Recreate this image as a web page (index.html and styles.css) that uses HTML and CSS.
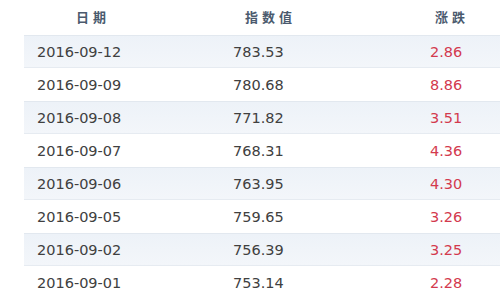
FILE: index.html
```html
<!DOCTYPE html>
<html lang="zh-CN">
<head>
    <meta charset="UTF-8">
    <title>指数值</title>
    <link rel="stylesheet" href="styles.css">
</head>
<body>
    <div class="quote-table">
        <div class="row head">
            <div class="col-date">日期</div>
            <div class="col-value">指数值</div>
            <div class="col-change">涨跌</div>
        </div>
        <div class="row odd">
            <div>2016-09-12</div><div>783.53</div><div class="up">2.86</div>
        </div>
        <div class="row">
            <div>2016-09-09</div><div>780.68</div><div class="up">8.86</div>
        </div>
        <div class="row odd">
            <div>2016-09-08</div><div>771.82</div><div class="up">3.51</div>
        </div>
        <div class="row">
            <div>2016-09-07</div><div>768.31</div><div class="up">4.36</div>
        </div>
        <div class="row odd">
            <div>2016-09-06</div><div>763.95</div><div class="up">4.30</div>
        </div>
        <div class="row">
            <div>2016-09-05</div><div>759.65</div><div class="up">3.26</div>
        </div>
        <div class="row odd">
            <div>2016-09-02</div><div>756.39</div><div class="up">3.25</div>
        </div>
        <div class="row">
            <div>2016-09-01</div><div>753.14</div><div class="up">2.28</div>
        </div>
    </div>
</body>
</html>
```

FILE: styles.css
```css
body {
    margin: 0;
    background-color: #fff;
    font-family: "DejaVu Sans", Verdana, "Noto Sans CJK SC", sans-serif;
    overflow: hidden;
}
.quote-table {
    margin-left: 24px;
}
.row {
    display: grid;
    grid-template-columns: 196px 197px 1fr;
    height: 33px;
    align-items: center;
    font-size: 14.5px;
    color: #404040;
    box-sizing: border-box;
}
.row > div {
    padding-left: 13px;
}
.row.odd {
    background: linear-gradient(#edf2f8, #f3f6fa);
    border-top: 1px solid #e2e8ef;
    border-bottom: 1px solid #e6ebf1;
}
.head {
    height: 35px;
    font-family: "Noto Sans CJK SC", sans-serif;
    font-size: 13px;
    font-weight: bold;
    color: #4b5a6e;
    letter-spacing: 4px;
    padding-bottom: 2px;
}
.head .col-date {
    padding-left: 52px;
}
.head .col-value {
    padding-left: 25px;
}
.head .col-change {
    padding-left: 18px;
}
.up {
    color: #d33a4e;
}
```
